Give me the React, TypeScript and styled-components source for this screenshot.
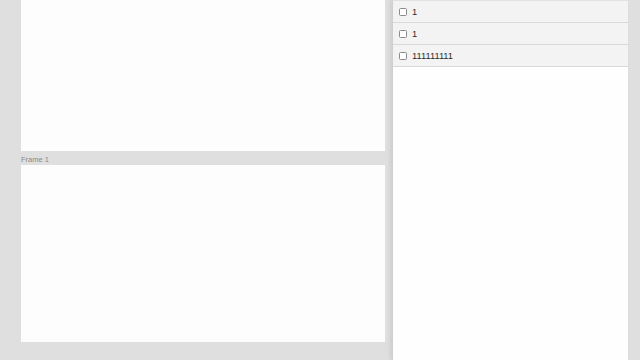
import styled, { createGlobalStyle } from "styled-components";

const Global = createGlobalStyle`
  html, body {
    margin: 0;
    padding: 0;
    background: #dfdfdf;
    font-family: "Liberation Sans", Arial, sans-serif;
  }
`;

const Page = styled.div`
  display: flex;
  width: 640px;
  height: 360px;
  overflow: hidden;
  background: #dfdfdf;
`;

const Canvas = styled.div`
  display: flex;
  flex-direction: column;
  width: 364px;
  padding-left: 21px;
`;

const Frame = styled.div<{ $h: number }>`
  height: ${(p) => p.$h}px;
  background: #fdfdfd;
`;

const FrameLabel = styled.div`
  height: 14px;
  display: flex;
  align-items: flex-end;
  font-size: 7.5px;
  color: #8a8a8a;
  line-height: 10px;
`;

const Panel = styled.div`
  margin-left: 7px;
  width: 236px;
  height: 360px;
  background: #fefefe;
  border-left: 1px solid #cfcfcf;
  box-shadow: -2px 0 4px rgba(0, 0, 0, 0.08);
  border-top: 1px solid #e2e2e2;
  box-sizing: border-box;
`;

const Row = styled.div`
  display: flex;
  align-items: center;
  height: 21px;
  padding-left: 6px;
  gap: 5px;
  background: #f3f3f3;
  border-bottom: 1px solid #d9d9d9;
  font-size: 9.3px;
  color: #2a2a2a;
`;

const Box = styled.span`
  width: 6px;
  height: 6px;
  border: 1px solid #8a8a8a;
  border-radius: 1.5px;
  background: #fff;
`;

const items = ["1", "1", "111111111"];

export default function App() {
  return (
    <>
      <Global />
      <Page>
        <Canvas>
          <Frame $h={151} />
          <FrameLabel>Frame 1</FrameLabel>
          <Frame $h={177} />
        </Canvas>
        <Panel>
          {items.map((t, i) => (
            <Row key={i}>
              <Box />
              {t}
            </Row>
          ))}
        </Panel>
      </Page>
    </>
  );
}
